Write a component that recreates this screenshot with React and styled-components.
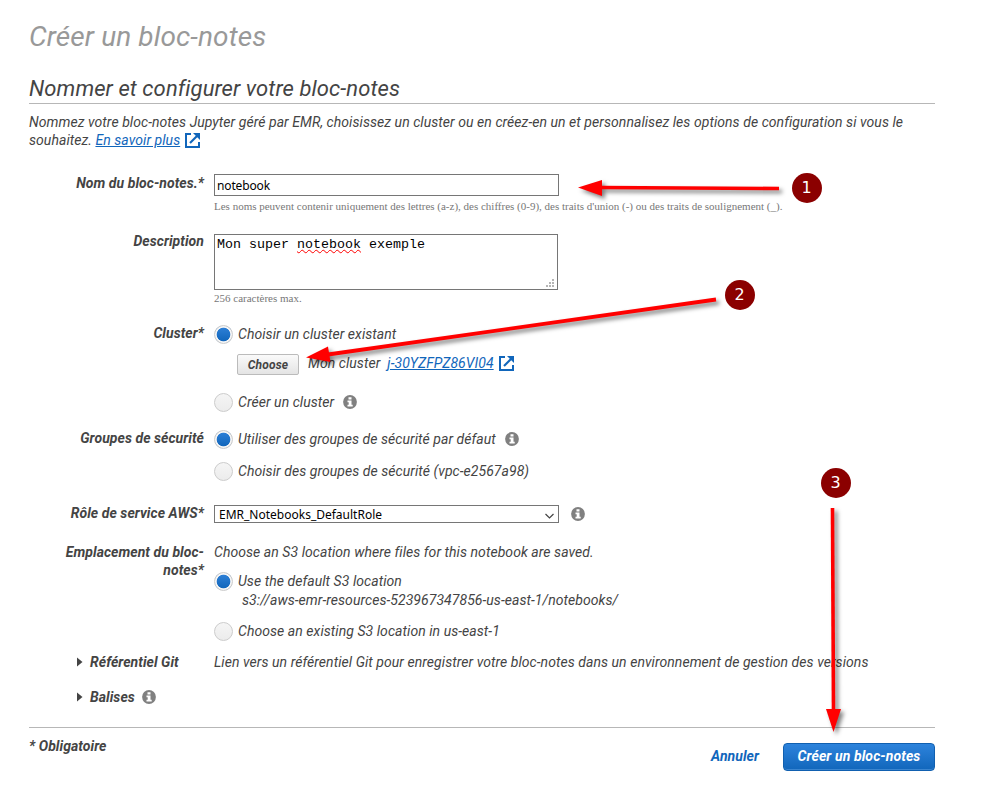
import React from "react";
import styled, { createGlobalStyle, css } from "styled-components";

const Global = createGlobalStyle`
  * { box-sizing: border-box; }
  body {
    margin: 0;
    background: #fff;
    color: #444;
    font: italic 14px/18px Roboto, sans-serif;
    letter-spacing: 0.058px;
  }
`;

const Page = styled.main`
  position: relative;
  width: 988px;
  height: 807px;
  padding: 19px 53px 0 29px;
  overflow: hidden;
`;

const Title = styled.h1`
  margin: 0;
  height: 55px;
  font-size: 28px;
  line-height: 36px;
  font-weight: 400;
  letter-spacing: 0.11px;
  color: #999;
  white-space: nowrap;
`;

const Heading = styled.h2`
  margin: 0 0 9px;
  height: 30px;
  border-bottom: 1px solid #b7b7b7;
  font-size: 22px;
  line-height: 30px;
  font-weight: 400;
  letter-spacing: 0.09px;
  white-space: nowrap;
`;

const Intro = styled.p`
  margin: 0;
  height: 61px;
`;

const Link = styled.a`
  color: #1166bb;
  text-decoration: underline;
  cursor: pointer;
`;

const ExternalSvg = styled.svg`
  width: 15px;
  height: 15px;
  margin-left: 5px;
  vertical-align: -3px;
  flex: none;
`;

const Row = styled.section`
  display: grid;
  grid-template-columns: 175px 1fr;
  column-gap: 10px;
  align-items: start;
  height: ${(p) => p.$h}px;
`;

const Label = styled.label`
  font-weight: 700;
  text-align: right;
`;

const Field = styled.div`
  display: flex;
  flex-direction: column;
  align-items: flex-start;
  padding-top: ${(p) => p.$top || 0}px;
  white-space: nowrap;
`;

const uiFont = css`
  font-family: "Noto Sans", sans-serif;
  font-style: normal;
  font-size: 12px;
  letter-spacing: 0;
  color: #000;
`;

const TextInput = styled.input`
  ${uiFont}
  width: 345px;
  height: 22px;
  padding: 0 2px;
  border: 1px solid #767676;
  border-radius: 0;
  outline: none;
  letter-spacing: -0.15px;
`;

const TextArea = styled.div`
  position: relative;
  width: 344px;
  height: 56px;
  padding: 1px 2px;
  border: 1px solid #767676;
  font: normal 13.33px/18px "Liberation Mono", monospace;
  letter-spacing: 0;
  color: #000;
`;

const Misspelled = styled.span`
  text-decoration: underline wavy #f00 1px;
  text-decoration-skip-ink: none;
  text-underline-offset: 1px;
`;

const Grip = styled.svg`
  position: absolute;
  right: 2px;
  bottom: 1px;
  width: 9px;
  height: 9px;
`;

const Hint = styled.small`
  margin-top: ${(p) => p.$gap}px;
  font: normal 11px/14px "Liberation Serif", serif;
  letter-spacing: 0;
  color: #777;
`;

const Option = styled.label`
  display: flex;
  align-items: flex-start;
  height: ${(p) => p.$h}px;
`;

const Radio = styled.span`
  width: 19px;
  height: 19px;
  margin-right: 5px;
  border: 1px solid #ccc;
  border-radius: 50%;
  background: ${(p) =>
    p.$on
      ? "radial-gradient(circle, transparent 6.4px, #f5f5f5 7.2px), linear-gradient(#2d7fd6 10%, #1166bb 90%)"
      : "linear-gradient(#f5f5f5, #ececec)"};
`;

const InfoSvg = styled.svg`
  width: 14px;
  height: 14px;
  margin: 2px 0 0 ${(p) => p.$gap}px;
  flex: none;
`;

const ClusterLine = styled.div`
  display: flex;
  align-items: flex-start;
  height: 39px;
  padding-left: 23px;
`;

const ChooseButton = styled.button`
  width: 62px;
  height: 21px;
  margin: 0 9px 0 0;
  padding: 1px 0 0;
  border: 1px solid #bbb;
  border-radius: 2px;
  background: linear-gradient(#fafafa, #e4e4e4);
  color: #444;
  font: italic 700 12px/18px Roboto, sans-serif;
  letter-spacing: 0.15px;
`;

const ClusterText = styled.span`
  display: flex;
  align-items: center;
`;

const ClusterLink = styled(Link)`
  margin-left: 7px;
`;

const SelectLine = styled.div`
  display: flex;
  align-items: flex-start;
`;

const Select = styled.div`
  ${uiFont}
  display: flex;
  align-items: center;
  justify-content: space-between;
  width: 345px;
  height: 18px;
  padding: 1px 4px 0;
  border: 1px solid #767676;
  line-height: 16px;
`;

const ChevronSvg = styled.svg`
  width: 9px;
  height: 6px;
  margin-top: 2px;
`;

const Path = styled.span`
  height: 31px;
  padding-left: 28px;
`;

const Expander = styled.div`
  display: flex;
  padding-left: 48px;
  font-weight: 700;
`;

const CaretSvg = styled.svg`
  width: 6px;
  height: 10px;
  margin: 4px 7px 0 0;
`;

const Footer = styled.footer`
  display: flex;
  align-items: flex-start;
  height: 60px;
  padding-top: 9px;
  border-top: 1px solid #b7b7b7;
  font-weight: 700;
`;

const Cancel = styled.a`
  margin: 10px 24px 0 auto;
  color: #1166bb;
`;

const Primary = styled.button`
  width: 152px;
  height: 28px;
  margin: 6px 0 0;
  padding: 0 0 2px;
  border: 1px solid #1160b0;
  border-radius: 4px;
  background: linear-gradient(#2d83dc, #1166bb);
  box-shadow: inset 0 -1px 0 #3a85d0;
  color: #fff;
  font: italic 700 14px/24px Roboto, sans-serif;
  letter-spacing: 0.1px;
`;

const ArrowLayer = styled.svg`
  position: absolute;
  inset: 0;
  pointer-events: none;
  filter: drop-shadow(3px 3px 2px rgba(0, 0, 0, 0.5));
`;

const Badge = styled.span`
  position: absolute;
  left: ${(p) => p.$x}px;
  top: ${(p) => p.$y}px;
  width: 30px;
  height: 30px;
  border-radius: 50%;
  background: #8b0000;
  color: #fff;
  text-align: center;
  font: normal 16px/29px "DejaVu Sans", sans-serif;
`;

const External = () => (
  <ExternalSvg viewBox="0 0 15 15" fill="none" stroke="#1166bb">
    <path d="M6 1H1v13h13V9" strokeWidth="2" />
    <path d="M5 10L12 3" strokeWidth="2.2" />
    <path d="M8 0h7v7z" fill="#1166bb" stroke="none" />
  </ExternalSvg>
);

const Info = ({ gap }) => (
  <InfoSvg $gap={gap} viewBox="0 0 14 14">
    <circle cx="7" cy="7" r="6.9" fill="#808080" />
    <path d="M5.5 2.2h3v2.3h-3zM4.5 5.4h4v4.4h1.2v1.8H4.5V9.8h1.2V7.2H4.5z" fill="#fff" />
  </InfoSvg>
);

const Caret = () => (
  <CaretSvg viewBox="0 0 6 10">
    <path d="M0 0.5L5.5 5 0 9.5z" fill="#444" />
  </CaretSvg>
);

const Choice = ({ on, h, info, children }) => (
  <Option $h={h}>
    <Radio $on={on} />
    {children}
    {info && <Info gap={info} />}
  </Option>
);

const gripDots = [[6, 0], [3, 3], [6, 3], [0, 6], [3, 6], [6, 6]];

export default function App() {
  return (
    <>
      <Global />
      <Page>
        <Title>Créer un bloc-notes</Title>
        <Heading>Nommer et configurer votre bloc-notes</Heading>
        <Intro>
          Nommez votre bloc-notes Jupyter géré par EMR, choisissez un cluster ou en créez-en un et
          personnalisez les options de configuration si vous le souhaitez. <Link>En savoir plus</Link>
          <External />
        </Intro>

        <Row $h={58}>
          <Label>Nom du bloc-notes.*</Label>
          <Field>
            <TextInput defaultValue="notebook" />
            <Hint $gap={3}>
              Les noms peuvent contenir uniquement des lettres (a-z), des chiffres (0-9), des traits
              d'union (-) ou des traits de soulignement (_).
            </Hint>
          </Field>
        </Row>

        <Row $h={92}>
          <Label>Description</Label>
          <Field $top={2}>
            <TextArea>
              Mon super <Misspelled>notebook</Misspelled> exemple
              <Grip viewBox="0 0 9 9">
                {gripDots.map(([x, y]) => (
                  <rect key={`${x}-${y}`} x={x} y={y} width="2" height="2" fill="#b5b5b5" />
                ))}
              </Grip>
            </TextArea>
            <Hint $gap={1}>256 caractères max.</Hint>
          </Field>
        </Row>

        <Row $h={105}>
          <Label>Cluster*</Label>
          <Field $top={1}>
            <Choice on h={29}>Choisir un cluster existant</Choice>
            <ClusterLine>
              <ChooseButton>Choose</ChooseButton>
              <ClusterText>
                Mon cluster <ClusterLink>j-30YZFPZ86VI04</ClusterLink>
                <External />
              </ClusterText>
            </ClusterLine>
            <Choice h={19} info={9}>Créer un cluster</Choice>
          </Field>
        </Row>

        <Row $h={75}>
          <Label>Groupes de sécurité</Label>
          <Field $top={1}>
            <Choice on h={32} info={9}>Utiliser des groupes de sécurité par défaut</Choice>
            <Choice h={19}>Choisir des groupes de sécurité (vpc-e2567a98)</Choice>
          </Field>
        </Row>

        <Row $h={39}>
          <Label>Rôle de service AWS*</Label>
          <Field $top={1}>
            <SelectLine>
              <Select>
                EMR_Notebooks_DefaultRole
                <ChevronSvg viewBox="0 0 9 6" fill="none" stroke="#444" strokeWidth="1.2">
                  <path d="M0.5 1l4 4 4-4" />
                </ChevronSvg>
              </Select>
              <Info gap={12} />
            </SelectLine>
          </Field>
        </Row>

        <Row $h={110}>
          <Label>Emplacement du bloc-notes*</Label>
          <Field>
            Choose an S3 location where files for this notebook are saved.
            <Field $top={11}>
              <Choice on h={19}>Use the default S3 location</Choice>
              <Path>s3://aws-emr-resources-523967347856-us-east-1/notebooks/</Path>
              <Choice h={19}>Choose an existing S3 location in us-east-1</Choice>
            </Field>
          </Field>
        </Row>

        <Row $h={35}>
          <Expander><Caret />Référentiel Git</Expander>
          <Field>
            Lien vers un référentiel Git pour enregistrer votre bloc-notes dans un environnement de
            gestion des versions
          </Field>
        </Row>

        <Row $h={39}>
          <Expander><Caret />Balises<Info gap={7} /></Expander>
        </Row>

        <Footer>
          * Obligatoire
          <Cancel>Annuler</Cancel>
          <Primary>Créer un bloc-notes</Primary>
        </Footer>

        <ArrowLayer width="988" height="807" viewBox="0 0 988 807" stroke="#f00" fill="#f00">
          <path d="M600 187.5L779 188.5" strokeWidth="3.6" />
          <path d="M578 187.5L602 180V196z" stroke="none" />
          <path d="M328 354.5L716 299.5" strokeWidth="3.8" />
          <path d="M306 357.5L328 346.5L330.5 362z" stroke="none" />
          <path d="M832.5 508L833.5 711" strokeWidth="3.6" />
          <path d="M833.5 732L826 709H841z" stroke="none" />
        </ArrowLayer>
        <Badge $x={791.6} $y={172.6}>1</Badge>
        <Badge $x={724.6} $y={279.5}>2</Badge>
        <Badge $x={820.6} $y={467.6}>3</Badge>
      </Page>
    </>
  );
}
